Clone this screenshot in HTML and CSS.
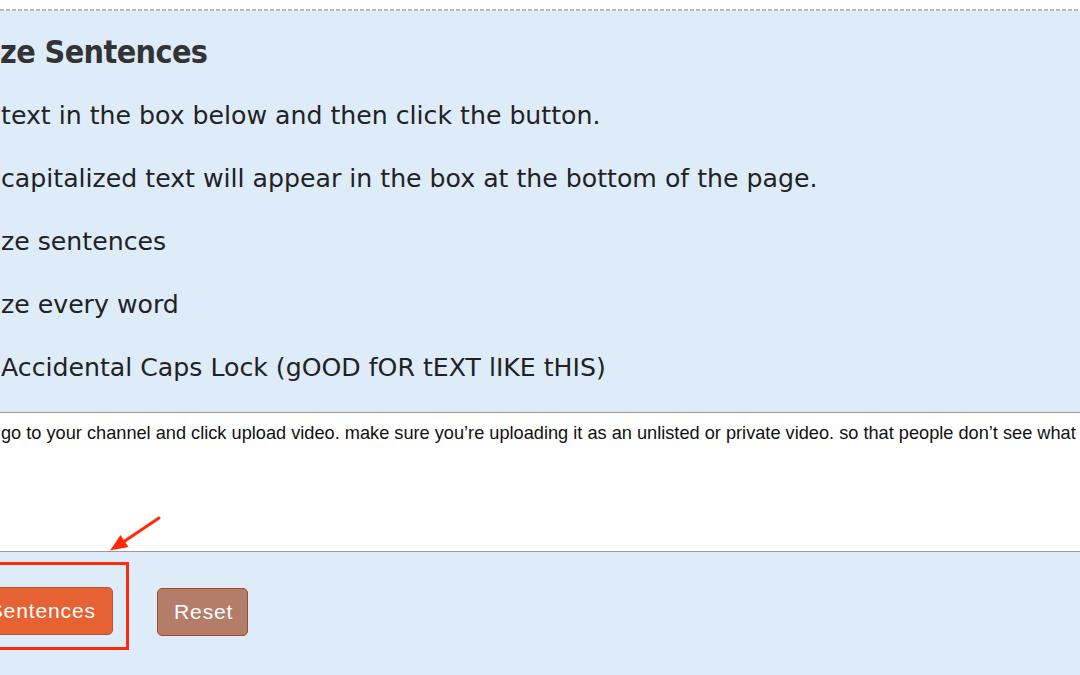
FILE: index.html
```html
<!DOCTYPE html>
<html lang="en">
<head>
    <meta charset="UTF-8">
    <meta name="viewport" content="width=device-width, initial-scale=1.0">
    <title>Capitalize Sentences</title>
    <link rel="stylesheet" href="styles.css">
</head>
<body>
    <div class="page">
        <div class="dash-line"></div>
        <div class="tool-panel">
            <h1 class="tool-title">ze Sentences</h1>
            <p class="tool-line">text in the box below and then click the button.</p>
            <p class="tool-line">capitalized text will appear in the box at the bottom of the page.</p>
            <p class="tool-line">ze sentences</p>
            <p class="tool-line">ze every word</p>
            <p class="tool-line">Accidental Caps Lock (gOOD fOR tEXT lIKE tHIS)</p>

            <textarea class="text-input" spellcheck="false">go to your channel and click upload video. make sure you’re uploading it as an unlisted or private video. so that people don’t see what you are working on until it is ready.</textarea>

            <div class="button-row">
                <div class="cap-wrap">
                    <button class="btn btn-capitalize">Capitalize Sentences</button>
                </div>
                <button class="btn btn-reset">Reset</button>
            </div>
        </div>

        <!-- annotation -->
        <svg class="markup" width="1080" height="675" viewBox="0 0 1080 675">
            <rect x="-10" y="563.5" width="137.5" height="85" fill="none" stroke="#ff2a0a" stroke-width="3"/>
            <line x1="159" y1="518" x2="121" y2="543.5" stroke="#ff2a0a" stroke-width="3" stroke-linecap="round"/>
            <polygon points="110,550.5 128.5,547 120.5,535" fill="#ff2a0a"/>
        </svg>
    </div>
</body>
</html>
```

FILE: styles.css
```css
html, body {
    margin: 0;
    padding: 0;
    background-color: #fff;
}
body {
    width: 1080px;
    height: 675px;
    overflow: hidden;
    font-family: "DejaVu Sans", Verdana, sans-serif;
}
.page {
    position: relative;
    height: 675px;
    padding-top: 9px;
    box-sizing: border-box;
    overflow: hidden;
}
.dash-line {
    height: 2px;
    background: repeating-linear-gradient(90deg, #b9b9b9 0 4px, transparent 4px 6px);
}
.tool-panel {
    background-color: #deebf9;
    padding-top: 10px;
    height: 665px;
    box-sizing: border-box;
}
.tool-title {
    margin: 0;
    font-family: "DejaVu Sans Condensed", "DejaVu Sans", sans-serif;
    font-size: 32px;
    line-height: 63px;
    font-weight: bold;
    color: #333;
    letter-spacing: -0.6px;
}
.tool-line {
    margin: 0;
    font-size: 25.2px;
    line-height: 63px;
    color: #222;
    padding-left: 1px;
    white-space: nowrap;
}
.text-input {
    display: block;
    box-sizing: border-box;
    width: 1500px;
    height: 140px;
    margin: 13px 0 0 -20px;
    padding: 9px 4px 0 21px;
    border: none;
    border-top: 1px solid #9a9a9a;
    border-bottom: 1px solid #9a9a9a;
    background-color: #fff;
    font-family: "Liberation Sans", Arial, sans-serif;
    font-size: 18.2px;
    line-height: 22px;
    color: #111;
    resize: none;
    overflow: hidden;
    outline: none;
}
.button-row {
    display: flex;
    align-items: flex-start;
    gap: 44px;
    margin-top: 35px;
}
.cap-wrap {
    width: 113px;
    display: flex;
    justify-content: flex-end;
}
.btn {
    flex-shrink: 0;
    height: 48px;
    padding: 0 16px;
    border-radius: 5px;
    font-family: "Liberation Sans", Arial, sans-serif;
    font-size: 21px;
    letter-spacing: 0.9px;
    color: #fff;
    cursor: pointer;
    white-space: nowrap;
}
.btn-capitalize {
    background-color: #e76233;
    border: 1px solid #b8542e;
}
.btn-reset {
    margin-top: 1px;
    width: 91px;
    background-color: #b37d6a;
    border: 1px solid #a4492c;
}
.markup {
    position: absolute;
    left: 0;
    top: 0;
    pointer-events: none;
}
```
